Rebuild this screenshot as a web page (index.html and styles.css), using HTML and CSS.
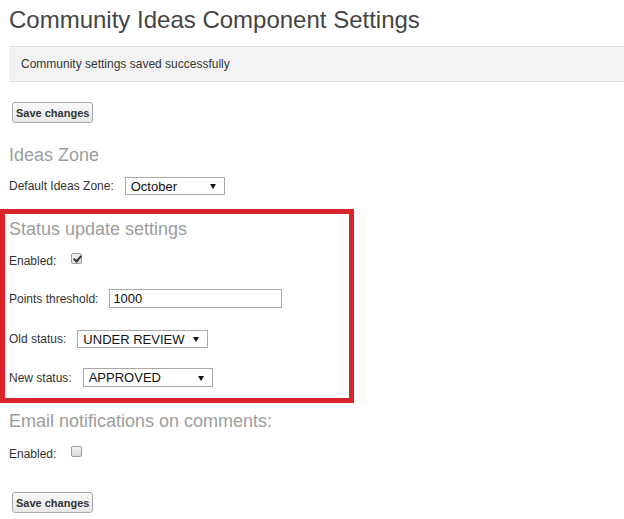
FILE: index.html
```html
<!DOCTYPE html>
<html lang="en">
<head>
  <meta charset="UTF-8" />
  <title>Community Ideas Component Settings</title>
  <link rel="stylesheet" href="styles.css">
</head>
<body>

<div class="page">
  <h1>Community Ideas Component Settings</h1>

  <div class="notice">Community settings saved successfully</div>

  <button class="btn btn-top">Save changes</button>

  <h2 class="zone-title">Ideas Zone</h2>
  <div class="row row-zone">
    <label>Default Ideas Zone:</label>
    <span class="select select-zone">
      <select><option>October</option></select>
    </span>
  </div>

  <section class="status-box">
    <h2>Status update settings</h2>
    <div class="row row-check row-first">
      <label>Enabled:</label>
      <input type="checkbox" checked>
    </div>
    <div class="row row-points">
      <label>Points threshold:</label>
      <input type="text" class="text-input" value="1000">
    </div>
    <div class="row row-old">
      <label>Old status:</label>
      <span class="select select-old">
        <select><option>UNDER REVIEW</option></select>
      </span>
    </div>
    <div class="row row-new">
      <label>New status:</label>
      <span class="select select-new">
        <select><option>APPROVED</option></select>
      </span>
    </div>
  </section>

  <h2 class="email-title">Email notifications on comments:</h2>
  <div class="row row-check row-email">
    <label>Enabled:</label>
    <input type="checkbox">
  </div>

  <button class="btn btn-bottom">Save changes</button>
</div>

</body>
</html>
```

FILE: styles.css
```css
* {
  margin: 0;
  padding: 0;
  box-sizing: border-box;
}

body {
  font-family: "Liberation Sans", Arial, sans-serif;
  background: #fff;
  color: #333;
  overflow: hidden;
}

.page {
  padding-left: 9px;
}

h1 {
  margin-top: 6px;
  font-size: 24px;
  line-height: 28px;
  font-weight: normal;
  color: #454545;
}

.notice {
  margin-top: 12px;
  height: 36px;
  line-height: 34px;
  padding-left: 12px;
  font-size: 12px;
  color: #333;
  background: #f3f3f3;
  border-top: 1px solid #dcdcdc;
  border-bottom: 1px solid #dcdcdc;
}

.btn {
  display: block;
  margin-left: 3px;
  height: 21px;
  padding: 0 3px;
  font-family: "Liberation Sans", Arial, sans-serif;
  font-size: 11px;
  font-weight: bold;
  color: #333;
  background: linear-gradient(#fafafa, #e8e8e8);
  border: 1px solid #a9a9a9;
  border-radius: 3px;
}

.btn-top {
  margin-top: 20px;
}

.btn-bottom {
  margin-top: 29px;
}

h2 {
  font-size: 18px;
  line-height: 22px;
  font-weight: normal;
  color: #9d9d9d;
}

.zone-title {
  margin-top: 21px;
}

.email-title {
  margin-top: 7px;
}

.row {
  display: flex;
  align-items: center;
  gap: 11px;
  font-size: 12px;
  line-height: 18px;
}

.row label {
  color: #333;
}

.row-zone {
  margin-top: 11px;
}

.row-check {
  align-items: flex-start;
  height: 18px;
}

.row-first {
  margin-top: 12px;
}

.row-points {
  margin-top: 19px;
}

.row-old {
  margin-top: 22px;
}

.row-new {
  margin-top: 20px;
}

.row-email {
  margin-top: 13px;
}

/* red outline round the status block */
.status-box {
  margin-top: 14px;
  margin-left: -9px;
  width: 354px;
  padding: 4px 0 11px 4px;
  border: 5px solid #d8252c;
}

input[type="checkbox"] {
  appearance: none;
  -webkit-appearance: none;
  position: relative;
  width: 11px;
  height: 11px;
  margin-top: 1px;
  margin-left: 4px;
  border: 1px solid #9c9c9c;
  border-radius: 2px;
  background: linear-gradient(#f4f4f4, #dcdcdc);
}

input[type="checkbox"]:checked::after {
  content: "";
  position: absolute;
  left: 3px;
  top: 0px;
  width: 3px;
  height: 6px;
  border-right: 2px solid #333;
  border-bottom: 2px solid #333;
  transform: rotate(40deg);
}

.text-input {
  width: 173px;
  height: 19px;
  padding: 0 3px;
  font-family: "Liberation Sans", Arial, sans-serif;
  font-size: 13px;
  color: #111;
  border: 1px solid #a9a9a9;
}

.select {
  position: relative;
  display: block;
}

.select select {
  appearance: none;
  -webkit-appearance: none;
  display: block;
  width: 100%;
  height: 100%;
  padding-left: 5px;
  font-family: "Liberation Sans", Arial, sans-serif;
  font-size: 13px;
  color: #111;
  background: #fff;
  border: 1px solid #a9a9a9;
  border-radius: 0;
}

.select::after {
  content: "";
  position: absolute;
  right: 9px;
  top: 50%;
  margin-top: -2px;
  border-left: 3px solid transparent;
  border-right: 3px solid transparent;
  border-top: 5px solid #111;
}

.select-zone {
  width: 100px;
  height: 18px;
}

.select-old {
  width: 131px;
  height: 18px;
}

.select-new {
  width: 130px;
  height: 19px;
}
```
